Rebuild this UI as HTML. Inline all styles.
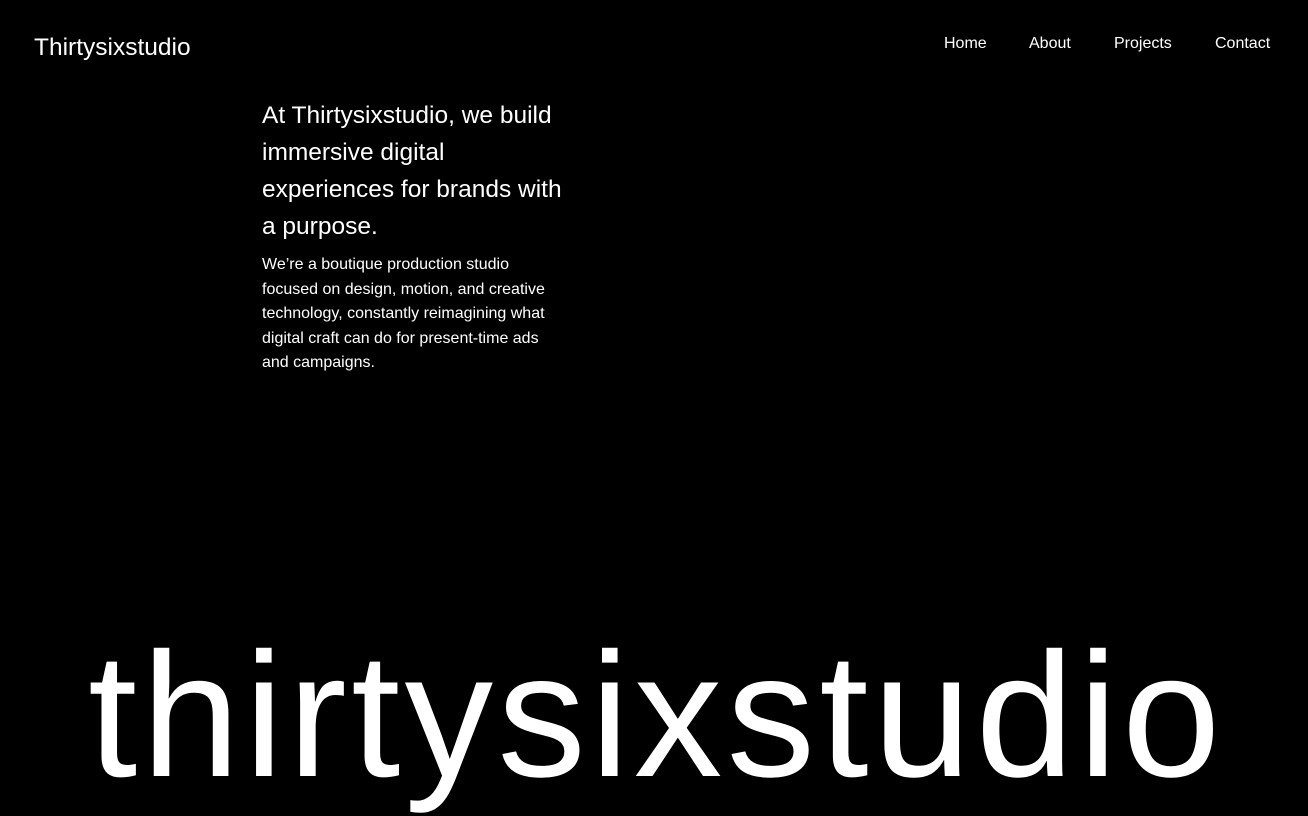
<!DOCTYPE html>
<html><head><meta charset="utf-8"><style>
html,body{margin:0;padding:0;background:#000;width:1308px;height:816px;overflow:hidden;font-family:"Liberation Sans",Arial,sans-serif;color:#fff}
.logo{position:absolute;left:34px;top:34px;font-size:24.5px}
.nav{position:absolute;top:35px;font-size:16px}
.h{position:absolute;left:262px;top:97px;width:312px;font-size:24.5px;line-height:37px}
.p{position:absolute;left:262px;top:253px;width:298px;font-size:16px;line-height:24.5px}
.big{position:absolute;left:88px;top:627px;font-size:177px;line-height:177px;letter-spacing:4.3px;white-space:nowrap}
</style></head><body>
<div class="logo">Thirtysixstudio</div>
<div class="nav" style="left:944px">Home</div>
<div class="nav" style="left:1029px">About</div>
<div class="nav" style="left:1114px">Projects</div>
<div class="nav" style="left:1215px">Contact</div>
<div class="h">At Thirtysixstudio, we build immersive digital experiences for brands with a purpose.</div>
<div class="p">We’re a boutique production studio focused on design, motion, and creative technology, constantly reimagining what digital craft can do for present-time ads and campaigns.</div>
<div class="big">thirtysixstudio</div>
</body></html>
